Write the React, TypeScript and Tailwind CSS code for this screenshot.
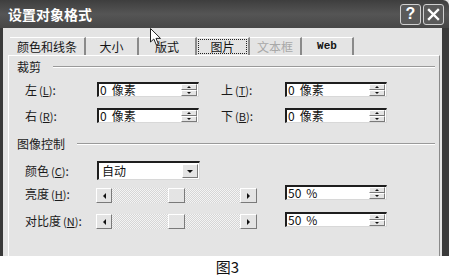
import React from 'react';

const raised =
  'bg-[#e4e4e4] border-t border-l border-t-white border-l-white border-b border-r border-b-[#7a7a7a] border-r-[#7a7a7a]';

function Tri({ dir, size = 3 }: { dir: 'up' | 'down' | 'left' | 'right'; size?: number }) {
  const s = size;
  const pts =
    dir === 'up'
      ? `0,${s} ${s},0 ${s * 2},${s}`
      : dir === 'down'
      ? `0,0 ${s * 2},0 ${s},${s}`
      : dir === 'left'
      ? `${s},0 ${s},${s * 2} 0,${s}`
      : `0,0 0,${s * 2} ${s},${s}`;
  const w = dir === 'up' || dir === 'down' ? s * 2 : s;
  const h = dir === 'up' || dir === 'down' ? s : s * 2;
  return (
    <svg width={w} height={h} viewBox={`0 0 ${w} ${h}`}>
      <polygon points={pts} fill="#111" />
    </svg>
  );
}

function SpinInput({ num, unit }: { num: string; unit: string }) {
  return (
    <div className="w-[102px] h-[15px] bg-white flex items-stretch border-t-2 border-l-2 border-t-[#1e1e1e] border-l-[#1e1e1e] border-b border-r border-b-[#d8d8d8] border-r-[#d8d8d8]">
      <div className="flex-1 text-[12px] leading-[12px] pl-[1px] text-[#111] flex items-center gap-[5px]">
        <span>{num}</span>
        <span>{unit}</span>
      </div>
      <div className="w-[16px] flex flex-col mr-[1px]">
        <div className={`flex-1 flex items-center justify-center ${raised}`}>
          <Tri dir="up" size={2} />
        </div>
        <div className={`flex-1 flex items-center justify-center ${raised}`}>
          <Tri dir="down" size={2} />
        </div>
      </div>
    </div>
  );
}

function Slider() {
  return (
    <div className="w-[161px] h-[15px] flex bg-[repeating-conic-gradient(#d6d6d6_0%_25%,#f4f4f4_0%_50%)] bg-[length:2px_2px]">
      <div className={`w-[16px] h-full flex items-center justify-center ${raised}`}>
        <Tri dir="left" size={3} />
      </div>
      <div className="w-[56px]" />
      <div className={`w-[17px] h-full ${raised}`} />
      <div className="flex-1" />
      <div className={`w-[17px] h-full flex items-center justify-center ${raised}`}>
        <Tri dir="right" size={3} />
      </div>
    </div>
  );
}

function Label({ text, k, w }: { text: string; k: string; w: string }) {
  return (
    <div className={`${w} text-[12px] text-[#1a1a1a] leading-[14px]`}>
      {text}
      <span className="text-[11px] ml-[2px]">(<span className="underline">{k}</span>)</span>:
    </div>
  );
}

function Section({ title }: { title: string }) {
  return (
    <div className="h-[14px] flex items-center gap-[12px] pr-[4px] -ml-[8px]">
      <span className="text-[12px] text-[#1a1a1a] leading-[14px]">{title}</span>
      <div className="flex-1 h-[2px] border-t border-t-[#9a9a9a] border-b border-b-white" />
    </div>
  );
}

const tabs = [
  { t: '颜色和线条', w: 'w-[76px]' },
  { t: '大小', w: 'w-[53px]' },
  { t: '版式', w: 'w-[58px]' },
  { t: '图片', w: 'w-[53px]', sel: true },
  { t: '文本框', w: 'w-[52px]', dis: true },
  { t: 'Web', w: 'w-[52px]', mono: true },
];

export default function App() {
  return (
    <div className="w-[449px] h-[276px] bg-white relative overflow-hidden font-['Noto_Sans_CJK_SC','Noto_Sans',sans-serif]">
      <div className="h-[256px] flex flex-col bg-[#e4e4e4]">
        {/* title bar */}
        <div className="h-[28px] flex items-center pl-[8px] pr-[5px] bg-gradient-to-b from-[#3e3e3e] via-[#555555] to-[#474747] rounded-tr-[6px]">
          <span className="text-white font-bold text-[14px] leading-none">设置对象格式</span>
          <div className="flex-1" />
          <div className="flex gap-[2px]">
            <div className="w-[21px] h-[21px] rounded-[3px] border border-[#d0d0d0] bg-[#5a5a5a] flex items-center justify-center text-white font-bold text-[16px] leading-none font-['Liberation_Sans',sans-serif]">
              ?
            </div>
            <div className="w-[21px] h-[21px] rounded-[3px] border border-[#d0d0d0] bg-[#5a5a5a] flex items-center justify-center">
              <svg width="13" height="13" viewBox="0 0 13 13">
                <path d="M2 2 L11 11 M11 2 L2 11" stroke="#fff" strokeWidth="2.4" strokeLinecap="square" />
              </svg>
            </div>
          </div>
        </div>

        {/* body */}
        <div className="flex-1 flex flex-col border-l-[3px] border-l-[#3a3a3a] border-r-[7px] border-r-[#3a3a3a] pl-[5px] pr-[2px] pt-[9px]">
          <div className="h-[18px] flex ml-[2px]">
            {tabs.map((tb) => (
              <div
                key={tb.t}
                className={`${tb.w} h-full flex items-center justify-center border-t border-t-white border-r-2 border-r-[#8a8a8a] text-[12px] ${
                  tb.dis ? 'text-[#a8a8a8]' : 'text-[#151515]'
                }`}
              >
                {tb.sel ? (
                  <span className="w-full h-[15px] mx-[1px] border border-dotted border-[#222] flex items-center justify-center leading-none">
                    {tb.t}
                  </span>
                ) : tb.mono ? (
                  <span className="leading-none font-['Liberation_Mono',monospace] font-bold text-[11px]">{tb.t}</span>
                ) : (
                  <span className="leading-none">{tb.t}</span>
                )}
              </div>
            ))}
          </div>

          <div className="flex-1 border-t border-l border-t-white border-l-white border-r border-r-[#8a8a8a] pl-[16px] pb-[4px] flex flex-col">
            <div className="mt-[4px]">
              <Section title="裁剪" />
            </div>
            <div className="mt-[8px] h-[15px] flex items-center">
              <Label text="左" k="L" w="w-[72px]" />
              <SpinInput num="0" unit="像素" />
              <div className="w-[22px]" />
              <Label text="上" k="T" w="w-[64px]" />
              <SpinInput num="0" unit="像素" />
            </div>
            <div className="mt-[11px] h-[15px] flex items-center">
              <Label text="右" k="R" w="w-[72px]" />
              <SpinInput num="0" unit="像素" />
              <div className="w-[22px]" />
              <Label text="下" k="B" w="w-[64px]" />
              <SpinInput num="0" unit="像素" />
            </div>
            <div className="mt-[14px]">
              <Section title="图像控制" />
            </div>
            <div className="mt-[10px] h-[19px] flex items-center">
              <Label text="颜色" k="C" w="w-[72px]" />
              <div className="w-[103px] h-[19px] bg-white flex items-stretch border-t-2 border-l-2 border-t-[#1e1e1e] border-l-[#1e1e1e] border-b border-r border-b-[#d8d8d8] border-r-[#d8d8d8]">
                <div className="flex-1 text-[12px] leading-none pl-[3px] text-[#111] flex items-center">自动</div>
                <div className={`w-[16px] my-[1px] mr-[1px] flex items-center justify-center ${raised}`}>
                  <Tri dir="down" size={3} />
                </div>
              </div>
            </div>
            <div className="mt-[5px] h-[18px] flex items-start">
              <div className="h-[18px] flex items-center">
                <Label text="亮度" k="H" w="w-[71px]" />
              </div>
              <div className="mt-[3px]">
                <Slider />
              </div>
              <div className="w-[28px]" />
              <SpinInput num="50" unit="%" />
            </div>
            <div className="mt-[9px] h-[18px] flex items-start">
              <div className="h-[18px] flex items-center">
                <Label text="对比度" k="N" w="w-[71px]" />
              </div>
              <div className="mt-[2px]">
                <Slider />
              </div>
              <div className="w-[28px]" />
              <SpinInput num="50" unit="%" />
            </div>
          </div>
        </div>
      </div>

      <div className="h-[20px] flex items-center justify-center pl-[6px] text-[15px] text-[#111] leading-none">
        图3
      </div>

      {/* mouse pointer */}
      <svg className="absolute left-[150px] top-[28px]" width="12" height="18" viewBox="0 0 12 18">
        <path d="M0.5 0.5 L0.5 14 L3.8 11 L6.3 16.8 L8.4 15.9 L6 10.4 L10.5 10.4 Z" fill="#fff" stroke="#222" strokeWidth="1" />
      </svg>
    </div>
  );
}
